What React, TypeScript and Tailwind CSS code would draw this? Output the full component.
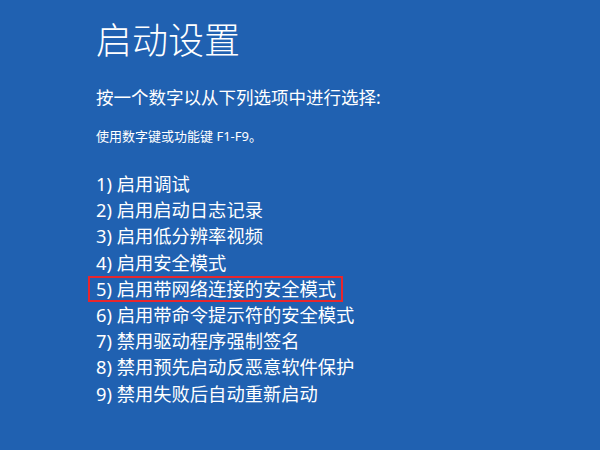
import React from 'react';

const options = [
  '启用调试',
  '启用启动日志记录',
  '启用低分辨率视频',
  '启用安全模式',
  '启用带网络连接的安全模式',
  '启用带命令提示符的安全模式',
  '禁用驱动程序强制签名',
  '禁用预先启动反恶意软件保护',
  '禁用失败后自动重新启动',
];

export default function App() {
  return (
    <div
      className="w-[600px] h-[450px] bg-[#2061b1] text-white pl-[96px] pt-[16px] overflow-hidden"
      style={{ fontFamily: '"Noto Sans", "Noto Sans CJK SC", sans-serif' }}
    >
      <h1 className="text-[36px] font-light leading-[50px]">启动设置</h1>
      <p className="mt-[18px] text-[17.5px] leading-[26px]">按一个数字以从下列选项中进行选择:</p>
      <p className="mt-[16px] text-[13px] leading-[20px]">使用数字键或功能键 F1-F9。</p>
      <ul className="mt-[25px] flex flex-col">
        {options.map((label, i) => (
          <li key={i} className="text-[18.3px] leading-[26.2px]">
            {i === 4 ? (
              <span className="-ml-[8px] inline-block border-2 border-[#e8262c] pl-[6px] pr-[5px] leading-[22px]">
                {i + 1}) {label}
              </span>
            ) : (
              <span>
                {i + 1}) {label}
              </span>
            )}
          </li>
        ))}
      </ul>
    </div>
  );
}
